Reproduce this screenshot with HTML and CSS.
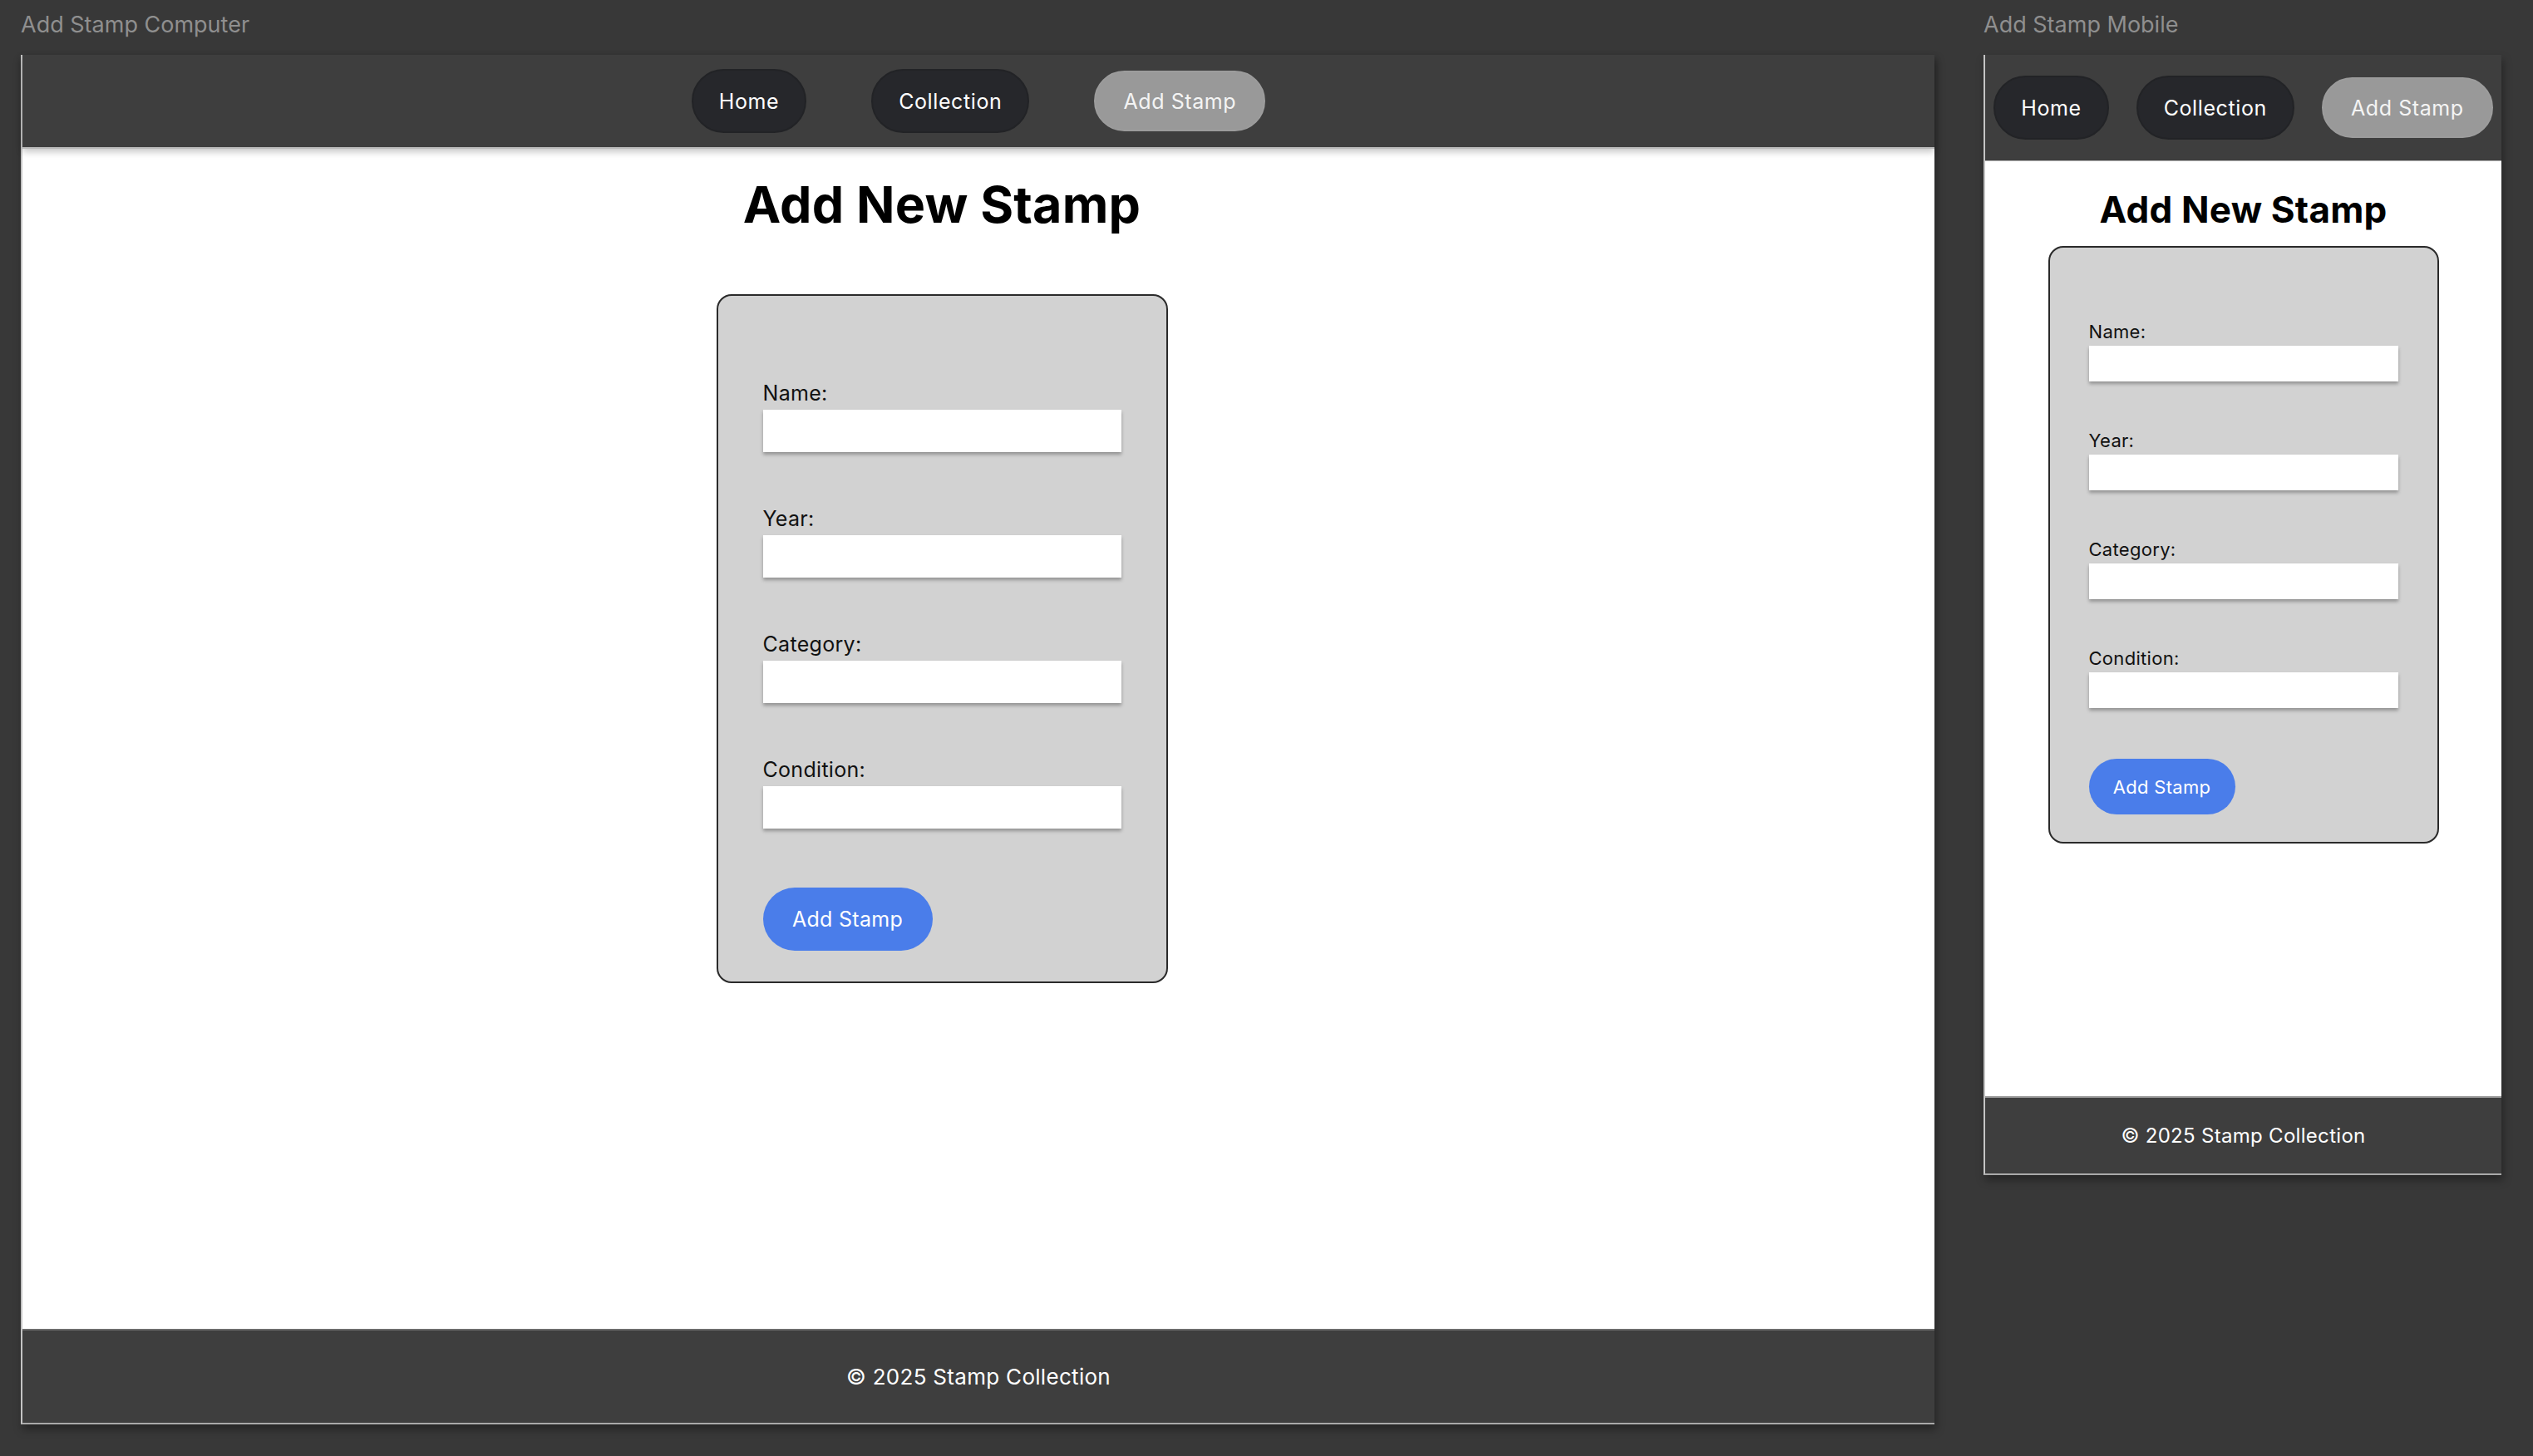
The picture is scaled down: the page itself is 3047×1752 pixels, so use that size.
FILE: index.html
```html
<!DOCTYPE html>
<html lang="en">
<head>
<meta charset="utf-8">
<title>Add Stamp</title>
<link rel="stylesheet" href="styles.css">
</head>
<body>
<div class="canvas">
  <section class="board board-desktop">
    <div class="board-label">Add Stamp Computer</div>
    <div class="frame frame-desktop">
      <nav class="nav nav-desktop">
        <a class="nav-btn">Home</a>
        <a class="nav-btn">Collection</a>
        <a class="nav-btn active">Add Stamp</a>
      </nav>
      <main class="main main-desktop">
        <h1 class="title">Add New Stamp</h1>
        <form class="card">
          <div class="field"><label>Name:</label><div class="input"></div></div>
          <div class="field"><label>Year:</label><div class="input"></div></div>
          <div class="field"><label>Category:</label><div class="input"></div></div>
          <div class="field"><label>Condition:</label><div class="input"></div></div>
          <button type="button" class="submit">Add Stamp</button>
        </form>
      </main>
      <footer class="footer">© 2025 Stamp Collection</footer>
    </div>
  </section>
  <section class="board board-mobile">
    <div class="board-label">Add Stamp Mobile</div>
    <div class="frame frame-mobile">
      <nav class="nav nav-mobile">
        <a class="nav-btn">Home</a>
        <a class="nav-btn">Collection</a>
        <a class="nav-btn active">Add Stamp</a>
      </nav>
      <main class="main main-mobile">
        <h1 class="title">Add New Stamp</h1>
        <form class="card">
          <div class="field"><label>Name:</label><div class="input"></div></div>
          <div class="field"><label>Year:</label><div class="input"></div></div>
          <div class="field"><label>Category:</label><div class="input"></div></div>
          <div class="field"><label>Condition:</label><div class="input"></div></div>
          <button type="button" class="submit">Add Stamp</button>
        </form>
      </main>
      <footer class="footer">© 2025 Stamp Collection</footer>
    </div>
  </section>
</div>
</body>
</html>
```
FILE: styles.css
```css
* { box-sizing: border-box; }
html, body {
  margin: 0;
  padding: 0;
  background: #383838;
  width: 3047px;
  height: 1752px;
  overflow: hidden;
  font-family: Inter, "Noto Sans", sans-serif;
}
.canvas {
  display: flex;
  align-items: flex-start;
  gap: 59px;
  padding: 13px 0 0 25px;
}
.board-label {
  font-size: 27px;
  line-height: 33px;
  color: #8f8f8f;
  margin-bottom: 20px;
}
.frame {
  display: flex;
  flex-direction: column;
  background: #fff;
  border-left: 2px solid #c4c4c4;
  border-bottom: 2px solid #a9a9a9;
  box-shadow: 2px 6px 10px rgba(0,0,0,0.35);
}
.frame-desktop { width: 2302px; height: 1648px; }
.frame-mobile { width: 623px; height: 1348px; }

.nav {
  display: flex;
  align-items: center;
  justify-content: center;
  background: #3e3e3e;
  position: relative;
  z-index: 1;
}
.nav-desktop {
  height: 113px;
  gap: 78px;
  border-bottom: 2px solid #b9b9b9;
  box-shadow: 0 4px 8px rgba(0,0,0,0.22);
}
.nav-mobile {
  height: 128px;
  gap: 33px;
  border-bottom: 1px solid #b0b0b0;
}
.nav-btn {
  display: flex;
  align-items: center;
  height: 77px;
  padding: 0 31px;
  border-radius: 39px;
  background: #26272b;
  border: 2px solid #222326;
  color: #fff;
  font-size: 25px;
  letter-spacing: 0.6px;
  text-decoration: none;
}
.nav-btn.active {
  height: 73px;
  background: #999999;
  border-color: #9c9c9c;
  padding: 0 33px;
  color: #f4f4f4;
}

.main {
  flex: 1;
  display: flex;
  flex-direction: column;
  align-items: center;
  background: #fff;
}
.main-desktop { padding: 31px 88px 0 0; }
.main-mobile { padding: 32px 0 0 0; }

.title {
  margin: 0;
  font-weight: 700;
  color: #000;
  letter-spacing: 0.2px;
}
.main-desktop .title { font-size: 61px; line-height: 73px; margin-bottom: 71px; }
.main-mobile .title { font-size: 44px; line-height: 52px; margin-bottom: 18px; }

.card {
  display: flex;
  flex-direction: column;
  align-items: flex-start;
  background: #d2d2d2;
  border: 2px solid #2a2a2a;
  border-radius: 18px;
  margin: 0;
}
.main-desktop .card { width: 543px; padding: 102px 54px 37px; }
.main-mobile .card { width: 470px; padding: 88px 47px 33px; }

.field { display: flex; flex-direction: column; width: 100%; }
.field label { color: #111; letter-spacing: 0.3px; }
.input {
  width: 100%;
  background: #fff;
  box-shadow: 0 3px 4px rgba(0,0,0,0.3);
}
.main-desktop .field label { font-size: 25px; line-height: 30px; margin-bottom: 5px; }
.main-desktop .input { height: 51px; margin-bottom: 65px; }
.main-desktop .field:last-of-type .input { margin-bottom: 71px; }
.main-mobile .field label { font-size: 22px; line-height: 26px; margin-bottom: 4px; }
.main-mobile .input { height: 43px; margin-bottom: 58px; }
.main-mobile .field:last-of-type .input { margin-bottom: 61px; }

.submit {
  border: none;
  background: #4a7dea;
  color: #fff;
  font-family: inherit;
  letter-spacing: 0.3px;
}
.main-desktop .submit { height: 76px; width: 204px; border-radius: 38px; font-size: 25px; }
.main-mobile .submit { height: 67px; width: 176px; border-radius: 34px; font-size: 22px; }

.footer {
  display: flex;
  align-items: center;
  justify-content: center;
  background: #3e3e3e;
  color: #fff;
  letter-spacing: 0.3px;
}
.frame-desktop .footer { height: 113px; border-top: 2px solid #6c6c6c; font-size: 26px; }
.frame-mobile .footer { height: 93px; border-top: 2px solid #9a9a9a; font-size: 24px; }
```
